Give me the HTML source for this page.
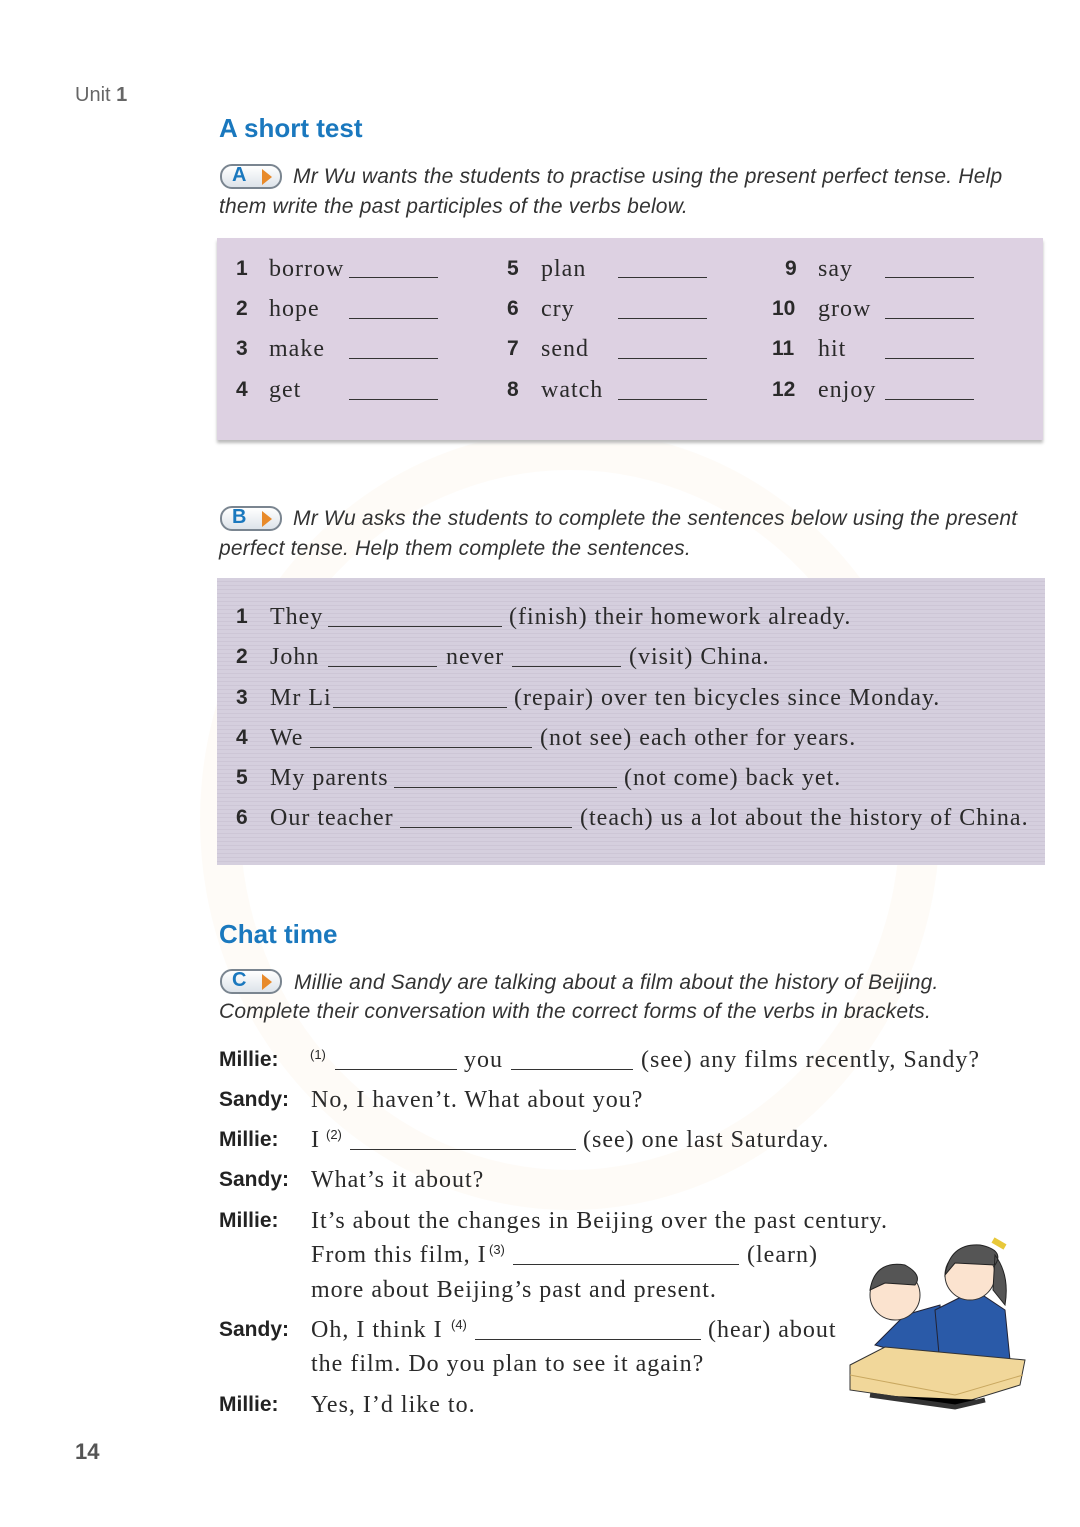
<!DOCTYPE html>
<html><head><meta charset="utf-8"><style>
body{margin:0;width:1080px;height:1527px;background:#fff;position:relative;overflow:hidden;font-family:"Liberation Serif",serif;color:#2a2a2a}
.a{position:absolute;white-space:nowrap;line-height:30px;height:30px}
.s{font-size:24px;letter-spacing:1px}
.n{font-family:"Liberation Sans",sans-serif;font-weight:bold;font-size:21px}
.u{position:absolute;height:0;border-bottom:1.5px solid #333}
.i{font-family:"Liberation Sans",sans-serif;font-style:italic;font-size:21px;color:#333;letter-spacing:0.2px}
.h{font-family:"Liberation Sans",sans-serif;font-weight:bold;font-size:26px;color:#1a78be}
.nm{font-family:"Liberation Sans",sans-serif;font-weight:bold;font-size:21px;color:#222}
.sp{font-size:13px;font-family:"Liberation Sans",sans-serif}
.badge{position:absolute;width:58px;height:21px;border:2px solid #7a8590;border-radius:12px;background:linear-gradient(#fff,#dde3ea)}
.badge b{position:absolute;left:10px;top:-2px;font-family:"Liberation Sans",sans-serif;font-size:20px;color:#1a78be}
.badge i{position:absolute;left:40px;top:3px;width:0;height:0;border-top:8px solid transparent;border-bottom:8px solid transparent;border-left:10px solid #e88a2a}
</style></head><body>
<div style="position:absolute;left:200px;top:430px;width:660px;height:700px;border-radius:50%;border:40px solid #fdf8f2;opacity:.6"></div>
<div class="a" style="left:75px;top:80px;font-family:'Liberation Sans',sans-serif;font-size:20px;color:#666">Unit <b>1</b></div>
<div class="a h" style="left:219px;top:113px">A short test</div>
<div class="badge" style="left:220px;top:164px"><b>A</b><i></i></div>
<div class="a i" style="left:293px;top:162px">Mr Wu wants the students to practise using the present perfect tense. Help</div>
<div class="a i" style="left:219px;top:192px">them write the past participles of the verbs below.</div>

<div style="position:absolute;left:217px;top:238px;width:826px;height:202px;background:#ddd1e2;box-shadow:0 3px 3px #bbb"></div>
<div class="a n" style="left:236px;top:254px">1</div><div class="a s" style="left:269px;top:254px">borrow</div><div class="u" style="left:349px;top:277px;width:89px"></div>
<div class="a n" style="left:236px;top:294px">2</div><div class="a s" style="left:269px;top:294px">hope</div><div class="u" style="left:349px;top:318px;width:89px"></div>
<div class="a n" style="left:236px;top:334px">3</div><div class="a s" style="left:269px;top:334px">make</div><div class="u" style="left:349px;top:358px;width:89px"></div>
<div class="a n" style="left:236px;top:375px">4</div><div class="a s" style="left:269px;top:375px">get</div><div class="u" style="left:349px;top:399px;width:89px"></div>
<div class="a n" style="left:507px;top:254px">5</div><div class="a s" style="left:541px;top:254px">plan</div><div class="u" style="left:618px;top:277px;width:89px"></div>
<div class="a n" style="left:507px;top:294px">6</div><div class="a s" style="left:541px;top:294px">cry</div><div class="u" style="left:618px;top:318px;width:89px"></div>
<div class="a n" style="left:507px;top:334px">7</div><div class="a s" style="left:541px;top:334px">send</div><div class="u" style="left:618px;top:358px;width:89px"></div>
<div class="a n" style="left:507px;top:375px">8</div><div class="a s" style="left:541px;top:375px">watch</div><div class="u" style="left:618px;top:399px;width:89px"></div>
<div class="a n" style="left:785px;top:254px">9</div><div class="a s" style="left:818px;top:254px">say</div><div class="u" style="left:885px;top:277px;width:89px"></div>
<div class="a n" style="left:772px;top:294px">10</div><div class="a s" style="left:818px;top:294px">grow</div><div class="u" style="left:885px;top:318px;width:89px"></div>
<div class="a n" style="left:772px;top:334px">11</div><div class="a s" style="left:818px;top:334px">hit</div><div class="u" style="left:885px;top:358px;width:89px"></div>
<div class="a n" style="left:772px;top:375px">12</div><div class="a s" style="left:818px;top:375px">enjoy</div><div class="u" style="left:885px;top:399px;width:89px"></div>

<div class="badge" style="left:220px;top:506px"><b>B</b><i></i></div>
<div class="a i" style="left:293px;top:504px">Mr Wu asks the students to complete the sentences below using the present</div>
<div class="a i" style="left:219px;top:534px">perfect tense. Help them complete the sentences.</div>

<div style="position:absolute;left:217px;top:578px;width:828px;height:287px;background:#d5cfde;background-image:repeating-linear-gradient(#d5cfde 0 3px,#cdc6d6 3px 4px)"></div>
<div class="a n" style="left:236px;top:602px">1</div><div class="a s" style="left:270px;top:602px">They</div><div class="u" style="left:328px;top:626px;width:174px"></div><div class="a s" style="left:509px;top:602px">(finish) their homework already.</div>
<div class="a n" style="left:236px;top:642px">2</div><div class="a s" style="left:270px;top:642px">John</div><div class="u" style="left:328px;top:666px;width:109px"></div><div class="a s" style="left:446px;top:642px">never</div><div class="u" style="left:512px;top:666px;width:109px"></div><div class="a s" style="left:629px;top:642px">(visit) China.</div>
<div class="a n" style="left:236px;top:683px">3</div><div class="a s" style="left:270px;top:683px">Mr Li</div><div class="u" style="left:333px;top:707px;width:174px"></div><div class="a s" style="left:514px;top:683px">(repair) over ten bicycles since Monday.</div>
<div class="a n" style="left:236px;top:723px">4</div><div class="a s" style="left:270px;top:723px">We</div><div class="u" style="left:310px;top:747px;width:222px"></div><div class="a s" style="left:540px;top:723px">(not see) each other for years.</div>
<div class="a n" style="left:236px;top:763px">5</div><div class="a s" style="left:270px;top:763px">My parents</div><div class="u" style="left:394px;top:787px;width:223px"></div><div class="a s" style="left:624px;top:763px">(not come) back yet.</div>
<div class="a n" style="left:236px;top:803px">6</div><div class="a s" style="left:270px;top:803px">Our teacher</div><div class="u" style="left:400px;top:827px;width:172px"></div><div class="a s" style="left:580px;top:803px">(teach) us a lot about the history of China.</div>

<div class="a h" style="left:219px;top:919px">Chat time</div>
<div class="badge" style="left:220px;top:969px"><b>C</b><i></i></div>
<div class="a i" style="left:294px;top:968px">Millie and Sandy are talking about a film about the history of Beijing.</div>
<div class="a i" style="left:219px;top:997px">Complete their conversation with the correct forms of the verbs in brackets.</div>

<div class="a nm" style="left:219px;top:1045px">Millie:</div><div class="a sp" style="left:310px;top:1040px">(1)</div><div class="u" style="left:335px;top:1069px;width:122px"></div><div class="a s" style="left:464px;top:1045px">you</div><div class="u" style="left:511px;top:1069px;width:122px"></div><div class="a s" style="left:641px;top:1045px">(see) any films recently, Sandy?</div>
<div class="a nm" style="left:219px;top:1085px">Sandy:</div><div class="a s" style="left:311px;top:1085px">No, I haven’t. What about you?</div>
<div class="a nm" style="left:219px;top:1125px">Millie:</div><div class="a s" style="left:311px;top:1125px">I</div><div class="a sp" style="left:326px;top:1120px">(2)</div><div class="u" style="left:350px;top:1149px;width:226px"></div><div class="a s" style="left:583px;top:1125px">(see) one last Saturday.</div>
<div class="a nm" style="left:219px;top:1165px">Sandy:</div><div class="a s" style="left:311px;top:1165px">What’s it about?</div>
<div class="a nm" style="left:219px;top:1206px">Millie:</div><div class="a s" style="left:311px;top:1206px">It’s about the changes in Beijing over the past century.</div>
<div class="a s" style="left:311px;top:1240px">From this film, I</div><div class="a sp" style="left:489px;top:1235px">(3)</div><div class="u" style="left:513px;top:1264px;width:226px"></div><div class="a s" style="left:747px;top:1240px">(learn)</div>
<div class="a s" style="left:311px;top:1275px">more about Beijing’s past and present.</div>
<div class="a nm" style="left:219px;top:1315px">Sandy:</div><div class="a s" style="left:311px;top:1315px">Oh, I think I</div><div class="a sp" style="left:451px;top:1310px">(4)</div><div class="u" style="left:475px;top:1339px;width:226px"></div><div class="a s" style="left:708px;top:1315px">(hear) about</div>
<div class="a s" style="left:311px;top:1349px">the film. Do you plan to see it again?</div>
<div class="a nm" style="left:219px;top:1390px">Millie:</div><div class="a s" style="left:311px;top:1390px">Yes, I’d like to.</div>

<svg style="position:absolute;left:845px;top:1235px" width="185" height="180" viewBox="0 0 185 180">
<path d="M30 110 L60 80 L95 70 L100 130 Z" fill="#2a5aa8" stroke="#223"/>
<path d="M90 75 L130 55 L160 75 L165 125 L95 130 Z" fill="#2a5aa8" stroke="#223"/>
<circle cx="50" cy="60" r="25" fill="#fbe3cf" stroke="#333"/>
<path d="M25 55 Q30 25 60 30 Q78 40 70 50 L40 48 Z" fill="#555" stroke="#222"/>
<circle cx="125" cy="40" r="25" fill="#fbe3cf" stroke="#333"/>
<path d="M100 40 Q105 8 135 10 Q160 15 150 30 L110 28 Z M150 20 Q165 40 160 70 L148 55 Z" fill="#555" stroke="#222"/>
<path d="M148 5 L160 12" stroke="#e8c83a" stroke-width="6"/>
<path d="M5 130 L40 112 L180 125 L175 150 L110 170 L5 155 Z" fill="#f1d79a" stroke="#333"/>
<path d="M5 140 L110 160 L178 140" fill="none" stroke="#c9a860"/>
<path d="M25 160 L110 172 L140 165" stroke="#333" stroke-width="5"/>
</svg>
<div class="a" style="left:75px;top:1437px;font-family:'Liberation Sans',sans-serif;font-weight:bold;font-size:22px;color:#555">14</div>
</body></html>
